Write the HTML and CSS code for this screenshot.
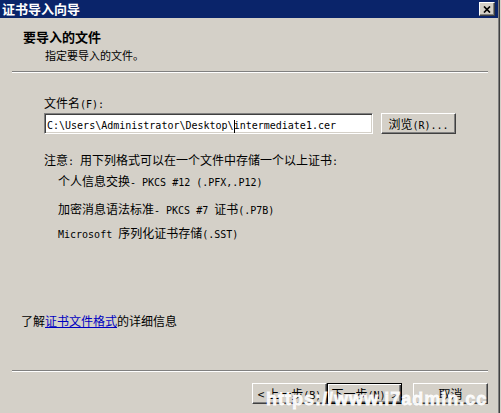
FILE: index.html
```html
<!DOCTYPE html>
<html lang="zh-CN">
<head>
<meta charset="utf-8">
<title>证书导入向导</title>
<link rel="stylesheet" href="styles.css">
</head>
<body>
<div class="window">
  <div class="titlebar">
    <span class="title">证书导入向导</span>
    <span class="close"><svg width="8" height="7" viewBox="0 0 8 7"><path d="M1 0.5 L7 6.5 M7 0.5 L1 6.5" stroke="#000" stroke-width="1.7" fill="none"/></svg></span>
  </div>
  <div class="header">
    <div class="heading">要导入的文件</div>
    <div class="subtitle">指定要导入的文件。</div>
  </div>
  <div class="sep"></div>
  <div class="main">
    <div class="content">
      <div class="label">文件名<span class="m">(F):</span></div>
      <div class="file-row">
        <div class="input"><span class="m">C:\Users\Administrator\Desktop\<span class="caret"></span>intermediate1.cer</span></div>
        <div class="btn">浏览<span class="m">(R)...</span></div>
      </div>
      <div class="note">注意<span class="m">: </span>用下列格式可以在一个文件中存储一个以上证书<span class="m">:</span></div>
      <div class="item i1">个人信息交换<span class="m">- PKCS #12 (.PFX,.P12)</span></div>
      <div class="item i2">加密消息语法标准<span class="m">- PKCS #7 </span>证书<span class="m">(.P7B)</span></div>
      <div class="item i3"><span class="m">Microsoft </span>序列化证书存储<span class="m">(.SST)</span></div>
    </div>
    <div class="more">了解<a class="link" href="#">证书文件格式</a>的详细信息</div>
  </div>
  <div class="sep"></div>
  <div class="footer">
    <div class="btn">&lt; 上一步<span class="m">(B)</span></div>
    <div class="btn default">下一步<span class="m">(N) &gt;</span></div>
    <div class="btn cancel">取消</div>
  </div>
</div>
<div class="watermark">https://www.i7admin.cc</div>
</body>
</html>
```
FILE: styles.css
```css
html, body {
  margin: 0;
  padding: 0;
}
body {
  background: #d4d0c8;
  width: 501px;
  height: 413px;
  overflow: hidden;
  position: relative;
  font-family: "Noto Sans CJK SC", "Liberation Sans", sans-serif;
  font-size: 12px;
  color: #000;
}
.m {
  font-family: "DejaVu Sans Mono", "Liberation Mono", "Noto Sans CJK SC", monospace;
  font-size: 10px;
}
.window {
  width: 498px;
  height: 413px;
  border-right: 1px solid #808080;
  box-shadow: 1px 0 0 #404040;
  display: flex;
  flex-direction: column;
}
.titlebar {
  height: 18px;
  flex: none;
  background: #0a246a;
  display: flex;
  align-items: center;
  justify-content: space-between;
  padding: 0 3px 0 2px;
}
.title {
  color: #fff;
  font-weight: bold;
  font-size: 13px;
  line-height: 18px;
}
.close {
  width: 16px;
  height: 14px;
  box-sizing: border-box;
  background: #d4d0c8;
  border: 1px solid;
  border-color: #fff #404040 #404040 #fff;
  box-shadow: inset -1px -1px #808080;
  display: flex;
  align-items: center;
  justify-content: center;
}
.header {
  height: 53px;
  flex: none;
  box-sizing: border-box;
  padding-top: 11px;
}
.heading {
  font-weight: bold;
  font-size: 13px;
  line-height: 16px;
  padding-left: 23px;
}
.subtitle {
  font-size: 11px;
  line-height: 16px;
  padding-left: 45px;
  margin-top: 2px;
}
.sep {
  flex: none;
  margin: 0 10px 0 12px;
  border-top: 1px solid #808080;
  border-bottom: 1px solid #fff;
}
.main {
  flex: 1;
  display: flex;
  flex-direction: column;
}
.content {
  padding: 23px 0 0 44px;
}
.label {
  line-height: 14px;
}
.file-row {
  display: flex;
  gap: 8px;
  margin-top: 1px;
}
.input {
  width: 329px;
  height: 21px;
  box-sizing: border-box;
  background: #fff;
  border: 1px solid;
  border-color: #808080 #fff #fff #808080;
  box-shadow: inset 1px 1px #404040, inset -1px -1px #d4d0c8;
  padding-left: 2px;
  line-height: 19px;
  white-space: nowrap;
  overflow: hidden;
}
.caret {
  display: inline-block;
  width: 1px;
  height: 13px;
  background: #000;
  vertical-align: middle;
  margin-right: -1px;
}
.btn {
  width: 75px;
  height: 21px;
  box-sizing: border-box;
  background: #d4d0c8;
  border: 1px solid;
  border-color: #fff #404040 #404040 #fff;
  box-shadow: inset -1px -1px #808080;
  text-align: center;
  line-height: 19px;
  white-space: nowrap;
}
.btn.default {
  border-color: #000;
  box-shadow: inset 1px 1px #fff, inset -1px -1px #404040, inset -2px -2px #808080;
}
.note {
  line-height: 16px;
  margin-top: 18px;
}
.item {
  line-height: 16px;
  padding-left: 14px;
}
.i1 { margin-top: 3px; }
.i2 { margin-top: 10px; }
.i3 { margin-top: 6px; }
.more {
  margin-top: auto;
  margin-bottom: 41px;
  padding-left: 21px;
  line-height: 16px;
}
.link {
  color: #0000c0;
  text-decoration: underline;
}
.footer {
  flex: none;
  height: 41px;
  box-sizing: border-box;
  display: flex;
  padding: 11px 0 0 252px;
}
.btn.cancel {
  margin-left: 11px;
}
.watermark {
  position: absolute;
  left: 266px;
  top: 390px;
  font-family: "Liberation Sans", Arial, sans-serif;
  font-weight: bold;
  font-size: 18px;
  line-height: 18px;
  letter-spacing: 1px;
  color: rgba(255, 255, 255, 0.95);
  -webkit-text-stroke: 0.8px rgba(255, 255, 255, 0.95);
  text-shadow: 0 0 1px rgba(0, 0, 0, 0.3);
  white-space: nowrap;
}
```
